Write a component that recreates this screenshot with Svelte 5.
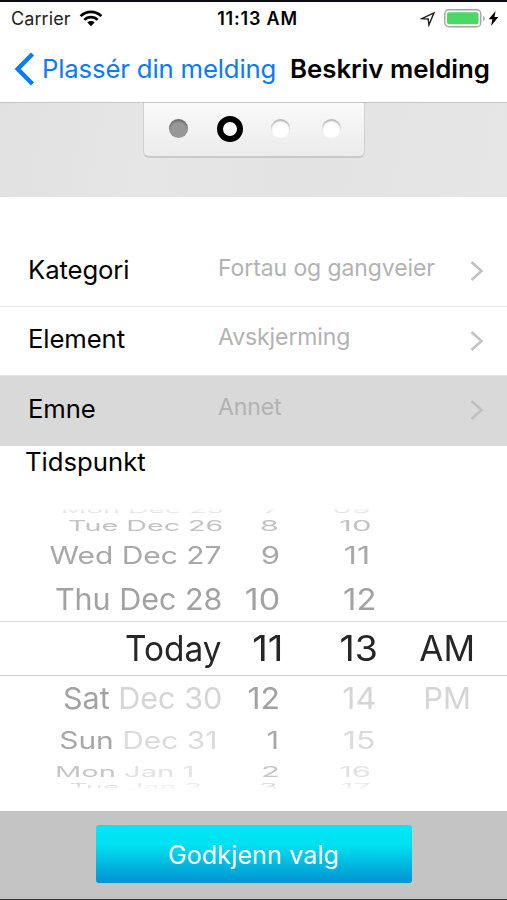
<script lang="ts">
  type Cell = { text: string; muted?: string; stretch?: number; shift?: number };
  type WheelRow = {
    height: number;
    squash: number;
    tone: string;
    faint?: string;
    cells: Cell[];
  };

  const fields = [
    { label: 'Kategori', value: 'Fortau og gangveier' },
    { label: 'Element', value: 'Avskjerming' },
    { label: 'Emne', value: 'Annet' },
  ];

  let selected = $state('Emne');

  const steps = ['done', 'current', 'todo', 'todo'];

  // rows get flatter, narrower and paler towards the edges of the drum
  const rows: WheelRow[] = [
    {
      height: 12,
      squash: 0.28,
      tone: '#d6d6d6',
      cells: [
        { text: 'Mon Dec 25', stretch: 0.915, shift: 1.5 },
        { text: '7' },
        { text: '09', shift: -6 },
      ],
    },
    {
      height: 20,
      squash: 0.47,
      tone: '#c2c2c2',
      cells: [
        { text: 'Tue Dec 26', stretch: 0.925, shift: 1.5 },
        { text: '8', shift: -1 },
        { text: '10', shift: -5.5 },
      ],
    },
    {
      height: 41,
      squash: 0.76,
      tone: '#a8a8a8',
      cells: [
        { text: 'Wed Dec 27', stretch: 0.966, shift: -0.5 },
        { text: '9' },
        { text: '11', stretch: 1.05, shift: -7 },
      ],
    },
    {
      height: 44,
      squash: 0.96,
      tone: '#a2a2a2',
      cells: [
        { text: 'Thu Dec 28', stretch: 0.983 },
        { text: '10', stretch: 1.1 },
        { text: '12', stretch: 1.06 },
      ],
    },
    {
      height: 55,
      squash: 1,
      tone: '#262626',
      cells: [
        { text: 'Today', stretch: 0.955, shift: -0.5 },
        { text: '11', stretch: 1.1, shift: 3 },
        { text: '13', stretch: 1.07, shift: 1 },
        { text: 'AM' },
      ],
    },
    {
      height: 45,
      squash: 0.96,
      tone: '#a2a2a2',
      faint: '#d5d5d5',
      cells: [
        { text: 'Sat', muted: ' Dec 30', stretch: 0.985, shift: 0.5 },
        { text: '12', stretch: 1.03, shift: 0.5 },
        { text: '', muted: '14', stretch: 1.05 },
        { text: '', muted: 'PM', shift: -4 },
      ],
    },
    {
      height: 41,
      squash: 0.76,
      tone: '#a8a8a8',
      faint: '#dadada',
      cells: [
        { text: 'Sun', muted: ' Dec 31', stretch: 0.965, shift: -4.5 },
        { text: '1', shift: -1 },
        { text: '', muted: '15', stretch: 1.03, shift: -2 },
      ],
    },
    {
      height: 20,
      squash: 0.47,
      tone: '#c6c6c6',
      faint: '#e2e2e2',
      cells: [
        { text: 'Mon', muted: ' Jan 1', stretch: 0.94, shift: -28 },
        { text: '2' },
        { text: '', muted: '16', shift: -6 },
      ],
    },
    {
      height: 11,
      squash: 0.28,
      tone: '#d6d6d6',
      faint: '#e8e8e8',
      cells: [
        { text: 'Tue', muted: ' Jan 2', stretch: 0.92, shift: -20 },
        { text: '3', shift: -2 },
        { text: '', muted: '17', shift: -6 },
      ],
    },
  ];
</script>

<div class="screen">
  <div class="status">
    <div class="carrier">
      <span>Carrier</span>
      <svg width="24" height="17" viewBox="0 0 24 17" fill="none" stroke="#000" stroke-width="2.7">
        <path d="M1.6 6.1a14.8 14.8 0 0 1 20.8 0" />
        <path d="M5.4 9.9a9.3 9.3 0 0 1 13.2 0" />
        <path d="M8.4 12.6a5.1 5.1 0 0 1 7.2 0L12 16.2z" fill="#000" stroke="none" />
      </svg>
    </div>
    <span class="clock">11:13 AM</span>
    <div class="power">
      <svg class="location" width="16" height="16" viewBox="0 0 16 16" fill="none" stroke="#222" stroke-width="1.4">
        <path d="M1.8 7.6 14 1.8 8.9 14 8.2 8z" />
      </svg>
      <svg width="42" height="19" viewBox="0 0 42 19">
        <rect x=".8" y=".8" width="36" height="17" rx="4" fill="#fff" stroke="#a4a4a4" stroke-width="1.4" />
        <rect x="3" y="3.2" width="31.5" height="12" rx="2" fill="#4bd964" />
        <path d="M39.2 6.6c2 .9 2 5 0 5.9z" fill="#a4a4a4" />
      </svg>
      <svg width="11" height="17" viewBox="0 0 11 17">
        <path d="M7.6 1 .7 9.3h3.7L3 16l7.3-9H6.4z" fill="#000" />
      </svg>
    </div>
  </div>

  <nav class="navbar">
    <button type="button" class="back">
      <svg width="21" height="34" viewBox="0 0 21 34" fill="none" stroke="#0a7aff" stroke-width="4.4">
        <path d="M18.5 2 3.7 17 18.5 32" />
      </svg>
      <span>Plassér din melding</span>
    </button>
    <h1>Beskriv melding</h1>
  </nav>

  <div class="band">
    <div class="steps">
      {#each steps as step}
        <span class="dot {step}"></span>
      {/each}
    </div>
  </div>

  <div class="fields">
    {#each fields as f}
      <button
        type="button"
        class="field"
        class:active={selected === f.label}
        onclick={() => (selected = f.label)}
      >
        <span class="label">{f.label}</span>
        <span class="value">{f.value}</span>
        <svg width="14" height="22" viewBox="0 0 14 22" fill="none" stroke="currentColor" stroke-width="2.5">
          <path d="M1.5 2 11.5 11 1.5 20" />
        </svg>
      </button>
    {/each}
  </div>

  <h2>Tidspunkt</h2>

  <div class="wheel">
    {#each rows as row, i}
      <div class="row" class:current={i === 4} style="height: {row.height}px; color: {row.tone}">
        {#each row.cells as c}
          <span
            class="cell"
            style="transform: translateX({c.shift ?? 0}px) scale({c.stretch ?? 1}, {row.squash})"
            >{c.text}{#if c.muted}<span style="color: {row.faint}">{c.muted}</span>{/if}</span
          >
        {/each}
      </div>
    {/each}
  </div>

  <footer>
    <button type="button" class="confirm">Godkjenn valg</button>
  </footer>
</div>

<style>
  :global(body) {
    margin: 0;
    background: #fff;
  }

  .screen {
    box-sizing: border-box;
    display: flex;
    flex-direction: column;
    width: 507px;
    height: 900px;
    border-top: 2px solid #0c0a0c;
    border-bottom: 1px solid #3a3839;
    background: #fff;
    color: #000;
    font-family: Inter, 'Liberation Sans', sans-serif;
    overflow: hidden;
  }

  button {
    margin: 0;
    padding: 0;
    border: none;
    background: none;
    font: inherit;
    color: inherit;
    text-align: left;
    cursor: pointer;
  }

  svg {
    display: block;
    flex: none;
  }

  .status {
    display: grid;
    grid-template-columns: 1fr auto 1fr;
    align-items: center;
    height: 33px;
    padding: 0 8px 0 11px;
    font-size: 18px;
  }

  .carrier,
  .power {
    display: flex;
    align-items: center;
  }

  .carrier {
    gap: 8px;
    color: #222;
    letter-spacing: 0.1px;
  }

  .power {
    gap: 2px;
    justify-content: flex-end;
  }

  .location {
    margin-right: 6px;
  }

  .clock {
    padding-left: 5px;
    font-size: 18px;
    font-weight: 600;
    letter-spacing: 0.8px;
  }

  .navbar {
    box-sizing: border-box;
    display: flex;
    align-items: center;
    height: 68px;
    padding: 0 17px 0 14px;
    border-bottom: 1px solid #c4c4c4;
    font-size: 25.7px;
    white-space: nowrap;
  }

  .back {
    display: flex;
    align-items: center;
    gap: 7px;
    color: #0a7aff;
    letter-spacing: -0.15px;
  }

  h1 {
    margin: 0 0 0 auto;
    font-size: 25.8px;
    font-weight: 600;
  }

  .band {
    display: flex;
    justify-content: center;
    align-items: flex-start;
    height: 94px;
    background: linear-gradient(100deg, #e1e1e1, #e6e6e6 30%, #e3e3e3 60%, #e6e6e6);
  }

  .steps {
    box-sizing: border-box;
    display: grid;
    grid-template-columns: repeat(4, 50.7px);
    justify-content: center;
    place-items: center;
    width: 222px;
    height: 55px;
    padding: 0 0 2px 3px;
    border: 1px solid #d0d0d0;
    border-top: none;
    border-bottom: 2px solid #c9c9c9;
    border-radius: 0 0 6px 6px;
    background: linear-gradient(#fafafa, #ebebeb);
  }

  .dot {
    box-sizing: border-box;
    width: 19px;
    height: 19px;
    border-radius: 50%;
    background: #fff;
    box-shadow: inset 0 2px 2px rgba(0, 0, 0, 0.3);
  }

  .dot.done {
    background: #979797;
  }

  .dot.current {
    width: 26px;
    height: 26px;
    border: 6.5px solid #000;
    box-shadow: none;
  }

  .fields {
    display: flex;
    flex-direction: column;
    padding-top: 40px;
  }

  .field {
    box-sizing: border-box;
    display: grid;
    grid-template-columns: 190px 1fr 14px;
    align-items: center;
    height: 69.5px;
    padding: 0 23px 0 28px;
    border-bottom: 1px solid #e4e4e4;
    color: #c2c2c2;
  }

  .field.active {
    border-color: #d9d9d9;
    background: #d9d9d9;
    color: #c0c0c0;
  }

  .label {
    padding-bottom: 4px;
    font-size: 25.7px;
    letter-spacing: -0.1px;
    color: #000;
  }

  .value {
    padding-bottom: 7px;
    font-size: 23px;
    letter-spacing: -0.1px;
    color: #b2b2b2;
  }

  h2 {
    margin: 0 0 0 25px;
    height: 58px;
    font-size: 25.7px;
    line-height: 32px;
    font-weight: 400;
  }

  .wheel {
    display: flex;
    flex-direction: column;
    height: 307px;
    mask-image: linear-gradient(transparent 4px, #000 10px, #000 280px, transparent 286px);
  }

  .row {
    box-sizing: border-box;
    display: grid;
    grid-template-columns: 222px 58px 97px 98px;
    align-items: center;
    justify-items: end;
    flex: none;
    font-size: 31px;
    line-height: 0;
    white-space: pre;
  }

  .row.current {
    border-top: 1px solid #dcdcdc;
    border-bottom: 1px solid #cfcfcf;
    font-size: 35px;
  }

  .cell {
    transform-origin: right center;
  }

  footer {
    display: flex;
    flex: 1;
    justify-content: center;
    align-items: center;
    padding-bottom: 1px;
    background: #c4c4c4;
  }

  .confirm {
    width: 316px;
    height: 58px;
    padding-top: 1px;
    border-radius: 3px;
    background: linear-gradient(#00e8f4, #00dff0 35%, #0093d0);
    color: #fff;
    font-size: 25px;
    letter-spacing: 0.15px;
    text-align: center;
  }
</style>
